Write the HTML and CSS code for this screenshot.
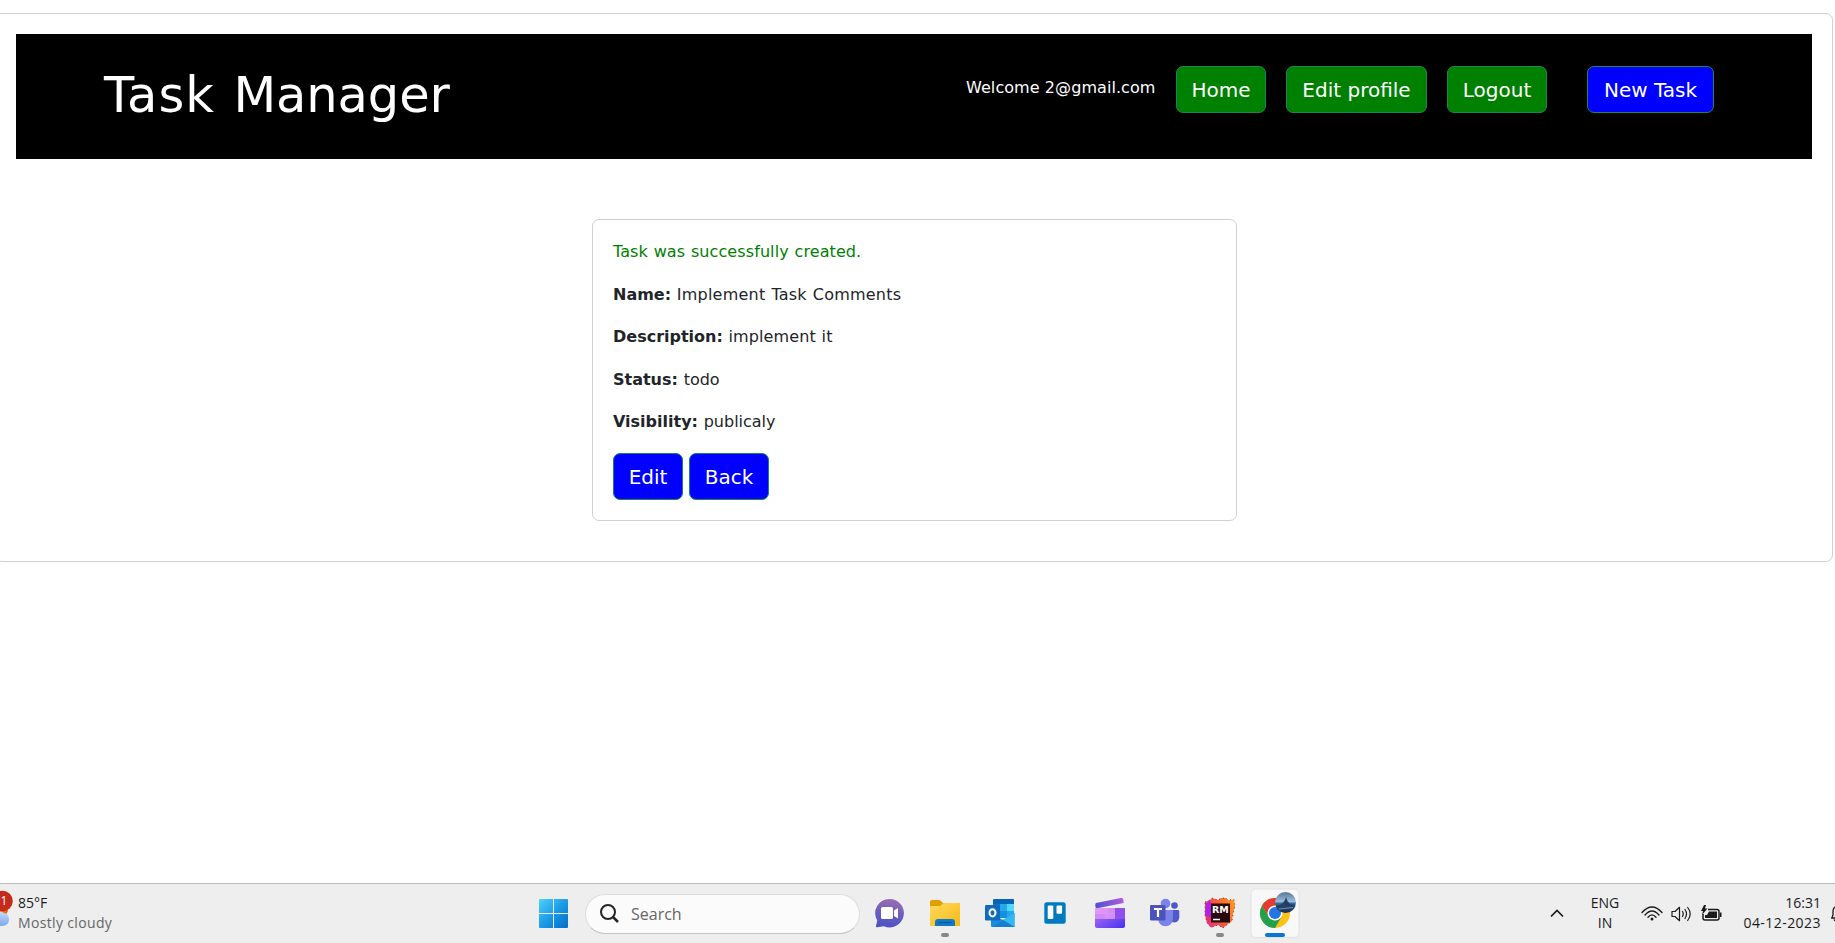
FILE: index.html
```html
<!DOCTYPE html>
<html lang="en">
<head>
<meta charset="utf-8">
<title>Task Manager</title>
<link rel="stylesheet" href="styles.css">
</head>
<body>
<main class="desktop">
  <section class="page-card">
    <header class="navbar">
      <h1 class="brand"><span class="brand-first">Task</span> Manager</h1>
      <nav class="nav-links">
        <span class="welcome">Welcome 2@gmail.com</span>
        <a class="btn btn-green home">Home</a>
        <a class="btn btn-green profile">Edit profile</a>
        <a class="btn btn-green logout">Logout</a>
        <a class="btn btn-blue new-task">New Task</a>
      </nav>
    </header>
    <article class="task-card">
      <p class="notice">Task was successfully created.</p>
      <p><strong>Name:</strong> <span class="v-name">Implement Task Comments</span></p>
      <p><strong>Description:</strong> <span class="v-desc">implement it</span></p>
      <p><strong>Status:</strong> <span>todo</span></p>
      <p><strong>Visibility:</strong> <span>publicaly</span></p>
      <div class="actions">
        <a class="btn btn-blue edit">Edit</a>
        <a class="btn btn-blue back">Back</a>
      </div>
    </article>
  </section>
</main>
<footer class="taskbar">
  <div class="weather">
    <svg class="weather-icon" width="18" height="59" viewBox="0 0 18 59">
      <defs><linearGradient id="cloud" x2="0" y2="1"><stop stop-color="#c4dcfc"/><stop offset="1" stop-color="#7ea7ec"/></linearGradient></defs>
      <circle cx="2" cy="26" r="6" fill="#f26a10"/>
      <path d="M-4 42V29Q1 26 4 29Q9 30 9 35.500Q9 42 2 42Z" fill="url(#cloud)"/>
      <circle cx="2.500" cy="17" r="10.300" fill="#c42b1c"/>
      <text class="badge-text" x="0.500" y="21">1</text>
    </svg>
    <div class="weather-text"><span class="temp">85°F</span><span class="sky">Mostly cloudy</span></div>
  </div>
  <svg class="start" width="29" height="29" viewBox="0 0 29 29">
    <defs><linearGradient id="win" x2="1" y2="1" gradientUnits="userSpaceOnUse" gradientTransform="scale(29)"><stop stop-color="#4fd3fc"/><stop offset=".5" stop-color="#1c9be6"/><stop offset="1" stop-color="#006ccb"/></linearGradient></defs>
    <path fill="url(#win)" d="M1 0h13v14H0V1Q0 0 1 0ZM15 0h13q1 0 1 1v13H15ZM0 15h14v14H1q-1 0-1-1ZM15 15h14v13q0 1-1 1H15Z"/>
  </svg>
  <div class="search">
    <svg width="19" height="19" viewBox="0 0 19 19" fill="none" stroke="#262626" stroke-width="2"><circle cx="8" cy="8" r="7"/><path d="M13 13L18 18" stroke-width="2.500"/></svg>
    <span>Search</span>
  </div>
  <div class="apps">
    <svg viewBox="0 0 55 59">
      <defs><linearGradient id="chat" x1=".6" x2=".4" y2="1"><stop stop-color="#9b6fb0"/><stop offset=".5" stop-color="#6d5cc0"/><stop offset="1" stop-color="#4c51c4"/></linearGradient></defs>
      <path fill="url(#chat)" d="M27.700 15a14.200 14.200 0 1 1-5.700 27.200L15 43.300Q13.500 43.500 14 42L15.300 36.500A14.200 14.200 0 0 1 27.700 15Z"/>
      <rect x="19" y="23" width="12" height="12" rx="1.500" fill="#fff"/><path d="M32 26.500L36 24V34.500L32 32Z" fill="#fff"/>
    </svg>
    <svg viewBox="0 0 55 59">
      <defs><linearGradient id="folder" x2="1" y2="1"><stop stop-color="#ffd95e"/><stop offset="1" stop-color="#f9b915"/></linearGradient></defs>
      <path d="M13 18Q13 16 15 16H22.500L26 19H43V26H13Z" fill="#dfa000"/>
      <path d="M13 22H23L26.500 19H42Q43 19 43 20V42H14Q13 42 13 41Z" fill="url(#folder)"/>
      <path d="M18 42V38Q18 35 21 35H35Q38 35 38 38V42Z" fill="#0f79c9"/><path d="M21.500 38.500H34.500" stroke="#075393"/>
      <rect x="24" y="49" width="8" height="4" rx="2" fill="#878787"/>
    </svg>
    <svg viewBox="0 0 55 59">
      <path d="M22 15H41Q42 15 42 16V31H21V16Q21 15 22 15Z" fill="#0364b8"/>
      <path d="M21 20H28V33H21Z" fill="#1470c0"/><path d="M28 20H35V32H28Z" fill="#28a8ea"/><path d="M35 20H42V31H35Z" fill="#50d9ff"/>
      <path d="M28 27H35V34H28Z" fill="#1490df"/><path d="M35 27H42V34H35Z" fill="#28a8ea"/>
      <path d="M19 29L31 36L42.500 29V43H20Q19 43 19 42Z" fill="#1c8fdc"/><path d="M31 36L42.500 29V43Z" fill="#35b8f1"/><path d="M20 43L31 36L42.500 43Z" fill="#1680d0"/>
      <rect x="13" y="21" width="15" height="15.500" rx="1.200" fill="#0f6cbd"/><ellipse cx="20.500" cy="28.800" rx="3" ry="3.600" fill="none" stroke="#fff" stroke-width="2"/>
    </svg>
    <svg viewBox="0 0 55 59">
      <rect x="16.300" y="17.300" width="23.400" height="23.400" rx="3.500" fill="#e0f2fc"/>
      <rect x="17.300" y="18.300" width="21.400" height="21.400" rx="2.500" fill="#0079bf"/>
      <rect x="20.700" y="21.500" width="5.600" height="13.500" rx="1" fill="#fff"/><rect x="29.500" y="21.500" width="5.600" height="8.200" rx="1" fill="#fff"/>
    </svg>
    <svg viewBox="0 0 55 59">
      <defs><linearGradient id="clip" x2="1"><stop stop-color="#5050d4"/><stop offset="1" stop-color="#b05be0"/></linearGradient>
      <linearGradient id="clipb" x2="1" y2="1"><stop stop-color="#bc78f8"/><stop offset="1" stop-color="#4430ee"/></linearGradient></defs>
      <path d="M14 19L39 14Q41 13.500 41.300 15.500L41.600 19L14 24.500Q12.500 20 14 19Z" fill="url(#clip)"/>
      <path d="M13 24H42Q43 24 43 25V42Q43 44 41 44H15Q13 44 13 42Z" fill="url(#clipb)"/>
      <path d="M13 24H26V29H33V35H23V30H13Z" fill="#efa6f6" opacity=".75"/><path d="M26 24H33V29H26Z" fill="#d48bf4"/><path d="M33 24H43V35H33Z" fill="#9050eb"/><path d="M13 30H23V35H13Z" fill="#d38af6"/>
    </svg>
    <svg viewBox="0 0 55 59">
      <circle cx="37.500" cy="21.500" r="3.300" fill="#5059c9"/><path d="M33 26H41Q42.300 26 42.300 27.300V33Q42 38 37.500 38.500Q34 38.500 33 36Z" fill="#5059c9"/>
      <circle cx="28.500" cy="19.500" r="4.800" fill="#7b83eb"/><path d="M22 26H35Q36 26 36 27V34Q35.500 42 28.500 42.300Q21.500 42 21 34V27Z" fill="#7b83eb"/>
      <rect x="13" y="21" width="15.500" height="15.500" rx="1.200" fill="#4b53bc"/><path d="M17 25H25M21 25V33" stroke="#fff" stroke-width="2.200" fill="none"/>
    </svg>
    <svg viewBox="0 0 55 59">
      <defs><linearGradient id="rm" x1="0" y1=".6" x2="1" y2=".2"><stop stop-color="#e9357b"/><stop offset=".45" stop-color="#fb5839"/><stop offset="1" stop-color="#ff9822"/></linearGradient></defs>
      <path d="M13 18L18 16L20 14L26 16L29 14L34 14L36 16L42 15.500L43 22L41 30L40 37L36 40L31 44L26 41L19 43.500L15 39L13 31Z" fill="url(#rm)" stroke="#1a1720" stroke-dasharray="1 3" stroke-width=".7"/>
      <path d="M14 20L18 16L21 26L19 35L13 31Z" fill="#b520e5"/><path d="M13.500 31L19 34L17 40Z" fill="#f02e63"/>
      <rect x="19" y="19.500" width="19" height="19" fill="#2b0a0e"/>
      <text class="rm-text" x="20" y="29">RM</text><path d="M21 35.500H28" stroke="#fff" stroke-width="1.500"/>
      <rect x="24" y="49" width="8" height="4" rx="2" fill="#878787"/>
    </svg>
    <svg viewBox="0 0 55 59">
      <defs><linearGradient id="sky" x2="0" y2="1"><stop stop-color="#587695"/><stop offset=".45" stop-color="#9cbddd"/><stop offset=".55" stop-color="#36689f"/><stop offset="1" stop-color="#17263f"/></linearGradient></defs>
      <rect x="4" y="5" width="48" height="48.500" rx="4.500" fill="#f8f8f8" stroke="#e2e2e2"/>
      <circle cx="28" cy="29" r="15" fill="#fbc116"/>
      <path d="M28 29L15 21.500A15 15 0 0 1 41 21.500H28Z" fill="#e33b2e"/>
      <path d="M15 21.500L21.500 32.800L28 29V21.500Z" fill="#e33b2e"/>
      <path d="M15 21.500L21.500 32.800L28 36.500L34.500 32.700L28 44A15 15 0 0 1 15 21.500Z" fill="#22a04b"/>
      <circle cx="28" cy="29" r="7.500" fill="#fff"/><circle cx="28" cy="29" r="6" fill="#2475e4"/>
      <circle cx="38.500" cy="18.500" r="10.500" fill="url(#sky)"/><path d="M29 22L35 20L38 16L39 13L40.500 17L43 20L48 21L47 23L30 24Z" fill="#243f67"/><path d="M32 25L46 23.500" stroke="#638dbd"/>
      <rect x="18" y="49" width="20" height="4" rx="2" fill="#0877d4"/>
    </svg>
  </div>
  <div class="tray">
    <svg class="chevron" width="14" height="9" viewBox="0 0 14 9" fill="none" stroke="#1b1b1b" stroke-width="1.700"><path d="M1 7.500L7 1.500L13 7.500"/></svg>
    <div class="lang"><span>ENG</span><span>IN</span></div>
    <svg class="wifi" width="22" height="16" viewBox="0 0 22 16" fill="none" stroke="#1b1b1b" stroke-width="1.400" stroke-linecap="round"><path d="M1 6.500Q11-4.500 21 6.500M4 9Q11 1 18 9M7 11.300Q11 6.500 15 11.300"/><circle cx="11" cy="13" r="1.500" fill="#1b1b1b" stroke="none"/></svg>
    <svg class="speaker" width="22" height="16" viewBox="0 0 22 16" fill="none" stroke="#1b1b1b" stroke-width="1.200" stroke-linecap="round" stroke-linejoin="round"><path d="M1 5.500H4L8.500 1.300V14.700L4 10.500H1Z"/><path d="M11.500 5.500Q13 8 11.500 10.500M14 3.500Q17 8 14 12.500M16.700 1.500Q21.700 8 16.700 14.500"/></svg>
    <svg class="battery" width="22" height="17" viewBox="0 0 22 17"><path d="M7 4.500H16Q18 4.500 18 6.500V13Q18 15 16 15H4Q2 15 2 13V9" fill="none" stroke="#1b1b1b" stroke-width="1.500"/><path d="M8 6.500H16V13H4V10H6Z" fill="#1b1b1b"/><path d="M19 7.500H20.500V12H19Z" fill="#1b1b1b"/><path d="M3 0L0 6H2L1 10L6.500 3.500H4L5 0Z" fill="#1b1b1b"/></svg>
    <div class="clock"><span>16:31</span><span class="date">04-12-2023</span></div>
    <svg class="bell" width="4" height="16" viewBox="0 0 4 16" fill="none" stroke="#1b1b1b" stroke-width="1.300"><path d="M4 1Q2 2 2 6V9L.8 12H4M3 13.500L4 15"/></svg>
  </div>
</footer>
</body>
</html>
```
FILE: styles.css
```css
* { box-sizing: border-box; }
body { margin: 0; height: 943px; overflow: hidden; background: #fff; display: flex; flex-direction: column; font-family: Verdana, "DejaVu Sans", sans-serif; color: #212529; font-size: 16px; }
.desktop { flex: 1; padding-top: 13px; }
.page-card { margin-left: -5px; width: 1838px; height: 549px; border: 1px solid #d0d0d0; border-radius: 7px; padding: 20px 20px 0; }
.navbar { width: 1796px; height: 125px; background: #000; color: #fff; display: flex; justify-content: space-between; padding: 32px 98px 0 88px; }
.brand { margin: 0; font-size: 49.500px; font-weight: 400; line-height: 58px; white-space: nowrap; word-spacing: 3px; letter-spacing: -0.100px; }
.brand-first { letter-spacing: 1px; }
.nav-links { display: flex; align-items: flex-start; }
.welcome { width: 210px; line-height: 24px; margin-top: 10px; white-space: nowrap; letter-spacing: 0.070px; }
.btn { display: inline-flex; align-items: center; justify-content: center; height: 47px; border: 1px solid #198754; border-radius: 7px; color: #fff; font-size: 20px; white-space: nowrap; }
.btn-green { background: #008000; }
.btn-blue { background: #00f; }
.home { width: 90px; margin-right: 20px; }
.profile { width: 141px; margin-right: 20px; }
.logout { width: 100px; margin-right: 40px; }
.new-task { width: 127px; }
.task-card { width: 645px; height: 302px; margin: 60px 0 0 576px; border: 1px solid #d0d0d0; border-radius: 7px; padding: 20px; }
.task-card p { margin: 0 0 18.500px; line-height: 24px; white-space: nowrap; word-spacing: 0.600px; }
.task-card .notice { color: #008000; letter-spacing: 0.090px; }
.v-name { letter-spacing: 0.230px; }
.v-desc { letter-spacing: 0.100px; }
.task-card .actions { display: flex; gap: 6px; margin-top: 19px; }
.edit { width: 70px; }
.back { width: 80px; }
.taskbar { height: 60px; border-top: 1px solid #bcbcbc; background: #eee; display: flex; align-items: center; font-family: "Segoe UI", "Open Sans", sans-serif; font-size: 14px; color: #1b1b1b; }
.taskbar > *, .tray > * { flex-shrink: 0; }
.weather { width: 539px; display: flex; align-items: center; }
.weather-text, .lang, .clock { display: flex; flex-direction: column; line-height: 20px; white-space: nowrap; padding-bottom: 2px; }
.sky { color: #666; letter-spacing: 0.350px; }
.badge-text { fill: #fff; font-size: 12px; }
.search { width: 275px; height: 40px; margin-left: 17px; border: 1px solid #ddd; border-bottom-color: #c5c5c5; border-radius: 20px; background: #fbfbfb; display: flex; align-items: center; gap: 12px; padding-left: 14px; font-size: 16px; color: #666; }
.apps { display: grid; grid-template-columns: repeat(8, 55px); margin-left: 2px; height: 59px; }
.apps svg { width: 55px; height: 59px; }
.rm-text { font: bold 9.500px "DejaVu Sans", sans-serif; fill: #fff; }
.tray { display: flex; align-items: center; margin-left: 248px; }
.lang { width: 40px; margin-left: 21px; align-items: center; }
.wifi { margin-left: 16px; }
.speaker { margin-left: 8px; }
.battery { margin-left: 8px; }
.clock { width: 84px; margin-left: 14px; align-items: flex-end; }
.date { letter-spacing: 0.450px; }
.bell { margin-left: 10px; }
```
